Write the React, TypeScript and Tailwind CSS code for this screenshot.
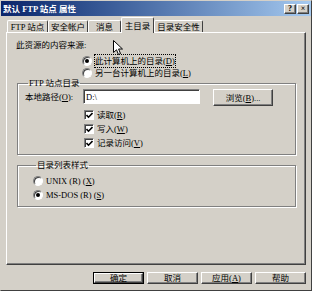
import React from "react";

const font = "font-['Liberation_Serif','Noto_Sans_CJK_SC',serif] text-[8.5px] leading-[12px] text-black";
const raised =
  "border border-t-white border-l-white border-r-[#404040] border-b-[#404040] shadow-[inset_-1px_-1px_0_#808080] bg-[#d4d0c8]";

function Key({ k }: { k: string }) {
  return (
    <span>
      (<span className="underline">{k}</span>)
    </span>
  );
}

function Radio({ checked }: { checked?: boolean }) {
  return (
    <span className="flex h-[10px] w-[10px] shrink-0 items-center justify-center rounded-full border border-t-[#808080] border-l-[#808080] border-r-white border-b-white bg-white shadow-[inset_1px_1px_0_#404040]">
      {checked && <span className="h-[4px] w-[4px] rounded-full bg-black" />}
    </span>
  );
}

function Check() {
  return (
    <span className="flex h-[10px] w-[10px] shrink-0 items-center justify-center border border-t-[#808080] border-l-[#808080] border-r-white border-b-white bg-white shadow-[inset_1px_1px_0_#404040]">
      <svg width="7" height="7" viewBox="0 0 7 7">
        <path d="M0.5 3 L2.5 5.2 L6.5 1" fill="none" stroke="black" strokeWidth="1.6" />
      </svg>
    </span>
  );
}

function Tab({ label, w, active }: { label: string; w: string; active?: boolean }) {
  if (active) {
    return (
      <div
        className={`relative z-10 -mb-px flex h-[16px] ${w} items-center justify-center rounded-t-[2px] border border-b-0 border-t-white border-l-white border-r-[#404040] bg-[#d4d0c8]`}
      >
        {label}
      </div>
    );
  }
  return (
    <div
      className={`flex h-[12px] ${w} items-center justify-center rounded-t-[2px] border border-b-0 border-t-white border-l-white border-r-[#404040] bg-[#d4d0c8]`}
    >
      {label}
    </div>
  );
}

function Btn({ children, def }: { children: React.ReactNode; def?: boolean }) {
  if (def) {
    return (
      <div className="h-[12px] w-[51px] border border-black">
        <div className={`flex h-full w-full items-center justify-center ${raised}`}>{children}</div>
      </div>
    );
  }
  return <div className={`flex h-[12px] w-[51px] items-center justify-center ${raised}`}>{children}</div>;
}

export default function App() {
  return (
    <div
      className={`relative flex h-[291px] w-[312px] flex-col border border-t-[#d4d0c8] border-l-[#d4d0c8] border-r-[#404040] border-b-[#404040] bg-[#d4d0c8] ${font}`}
    >
      {/* title bar */}
      <div className="flex h-[15px] items-center bg-gradient-to-r from-[#0a246a] to-[#a6caf0] pl-[2px] pr-[2px]">
        <span className="font-bold text-white">默认 FTP 站点 属性</span>
        <div className="ml-auto flex gap-[1px]">
          <div className={`flex h-[10px] w-[12px] items-center justify-center text-[8px] font-bold leading-none ${raised}`}>?</div>
          <div className={`flex h-[10px] w-[12px] items-center justify-center text-[8px] font-bold leading-none ${raised}`}>×</div>
        </div>
      </div>

      {/* tabs */}
      <div className="flex h-[16px] items-end pl-[6px]">
        <Tab label="FTP 站点" w="w-[41px]" />
        <Tab label="安全帐户" w="w-[40px]" />
        <Tab label="消息" w="w-[33px]" />
        <Tab label="主目录" w="w-[33px]" active />
        <Tab label="目录安全性" w="w-[49px]" />
      </div>

      {/* panel */}
      <div className="ml-[5px] flex h-[233px] w-[300px] flex-col border border-t-white border-l-white border-r-[#404040] border-b-[#404040] shadow-[inset_-1px_-1px_0_#808080] pt-[6px]">
        <div className="pl-[9px]">此资源的内容来源:</div>
        <div className="mt-[4px] flex h-[12px] items-center gap-[3px] pl-[75px]">
          <Radio checked />
          <span className="outline outline-1 outline-dotted outline-black">
            此计算机上的目录<Key k="D" />
          </span>
        </div>
        <div className="flex h-[12px] items-center gap-[3px] pl-[75px]">
          <Radio />
          <span>
            另一台计算机上的目录<Key k="L" />
          </span>
        </div>

        <fieldset className="-mt-[2px] ml-[10px] w-[279px] border border-[#808080] pb-[4px] pl-[7px] shadow-[inset_1px_1px_0_#fff,1px_1px_0_#fff]">
          <legend className="ml-[3px] px-[1px]">FTP 站点目录</legend>
          <div className="flex h-[17px] items-start">
            <span className="mt-[2px] w-[58px]">
              本地路径<Key k="O" />:
            </span>
            <div className="flex h-[15px] w-[117px] items-center border border-t-[#808080] border-l-[#808080] border-r-white border-b-white bg-white pl-[2px] shadow-[inset_1px_1px_0_#404040]">
              D:\
            </div>
            <div className={`ml-[13px] flex h-[17px] w-[60px] items-center justify-center ${raised}`}>
              浏览<Key k="B" />...
            </div>
          </div>
          <div className="mt-[2px] flex flex-col pl-[59px]">
            <div className="flex h-[14px] items-center gap-[3px]">
              <Check />
              <span>
                读取<Key k="R" />
              </span>
            </div>
            <div className="flex h-[14px] items-center gap-[3px]">
              <Check />
              <span>
                写入<Key k="W" />
              </span>
            </div>
            <div className="flex h-[14px] items-center gap-[3px]">
              <Check />
              <span>
                记录访问<Key k="V" />
              </span>
            </div>
          </div>
        </fieldset>

        <fieldset className="mt-[4px] ml-[10px] w-[279px] border border-[#808080] pb-[4px] pl-[15px] pt-[3px] shadow-[inset_1px_1px_0_#fff,1px_1px_0_#fff]">
          <legend className="ml-[3px] px-[1px]">目录列表样式</legend>
          <div className="flex h-[14px] items-center gap-[3px]">
            <Radio />
            <span>
              UNIX (R) <Key k="X" />
            </span>
          </div>
          <div className="flex h-[14px] items-center gap-[3px]">
            <Radio checked />
            <span>
              MS-DOS (R) <Key k="S" />
            </span>
          </div>
        </fieldset>
      </div>

      {/* buttons */}
      <div className="mt-[7px] flex justify-end gap-[3px] pr-[5px]">
        <Btn def>确定</Btn>
        <Btn>取消</Btn>
        <Btn>
          应用<Key k="A" />
        </Btn>
        <Btn>帮助</Btn>
      </div>

      {/* mouse cursor */}
      <svg className="absolute left-[112px] top-[39px]" width="11" height="16" viewBox="0 0 11 16">
        <path d="M0.5 0.5 L0.5 12.5 L3.5 9.8 L5.5 14.5 L7.5 13.6 L5.6 9 L9.5 9 Z" fill="white" stroke="black" strokeWidth="1" />
      </svg>
    </div>
  );
}
